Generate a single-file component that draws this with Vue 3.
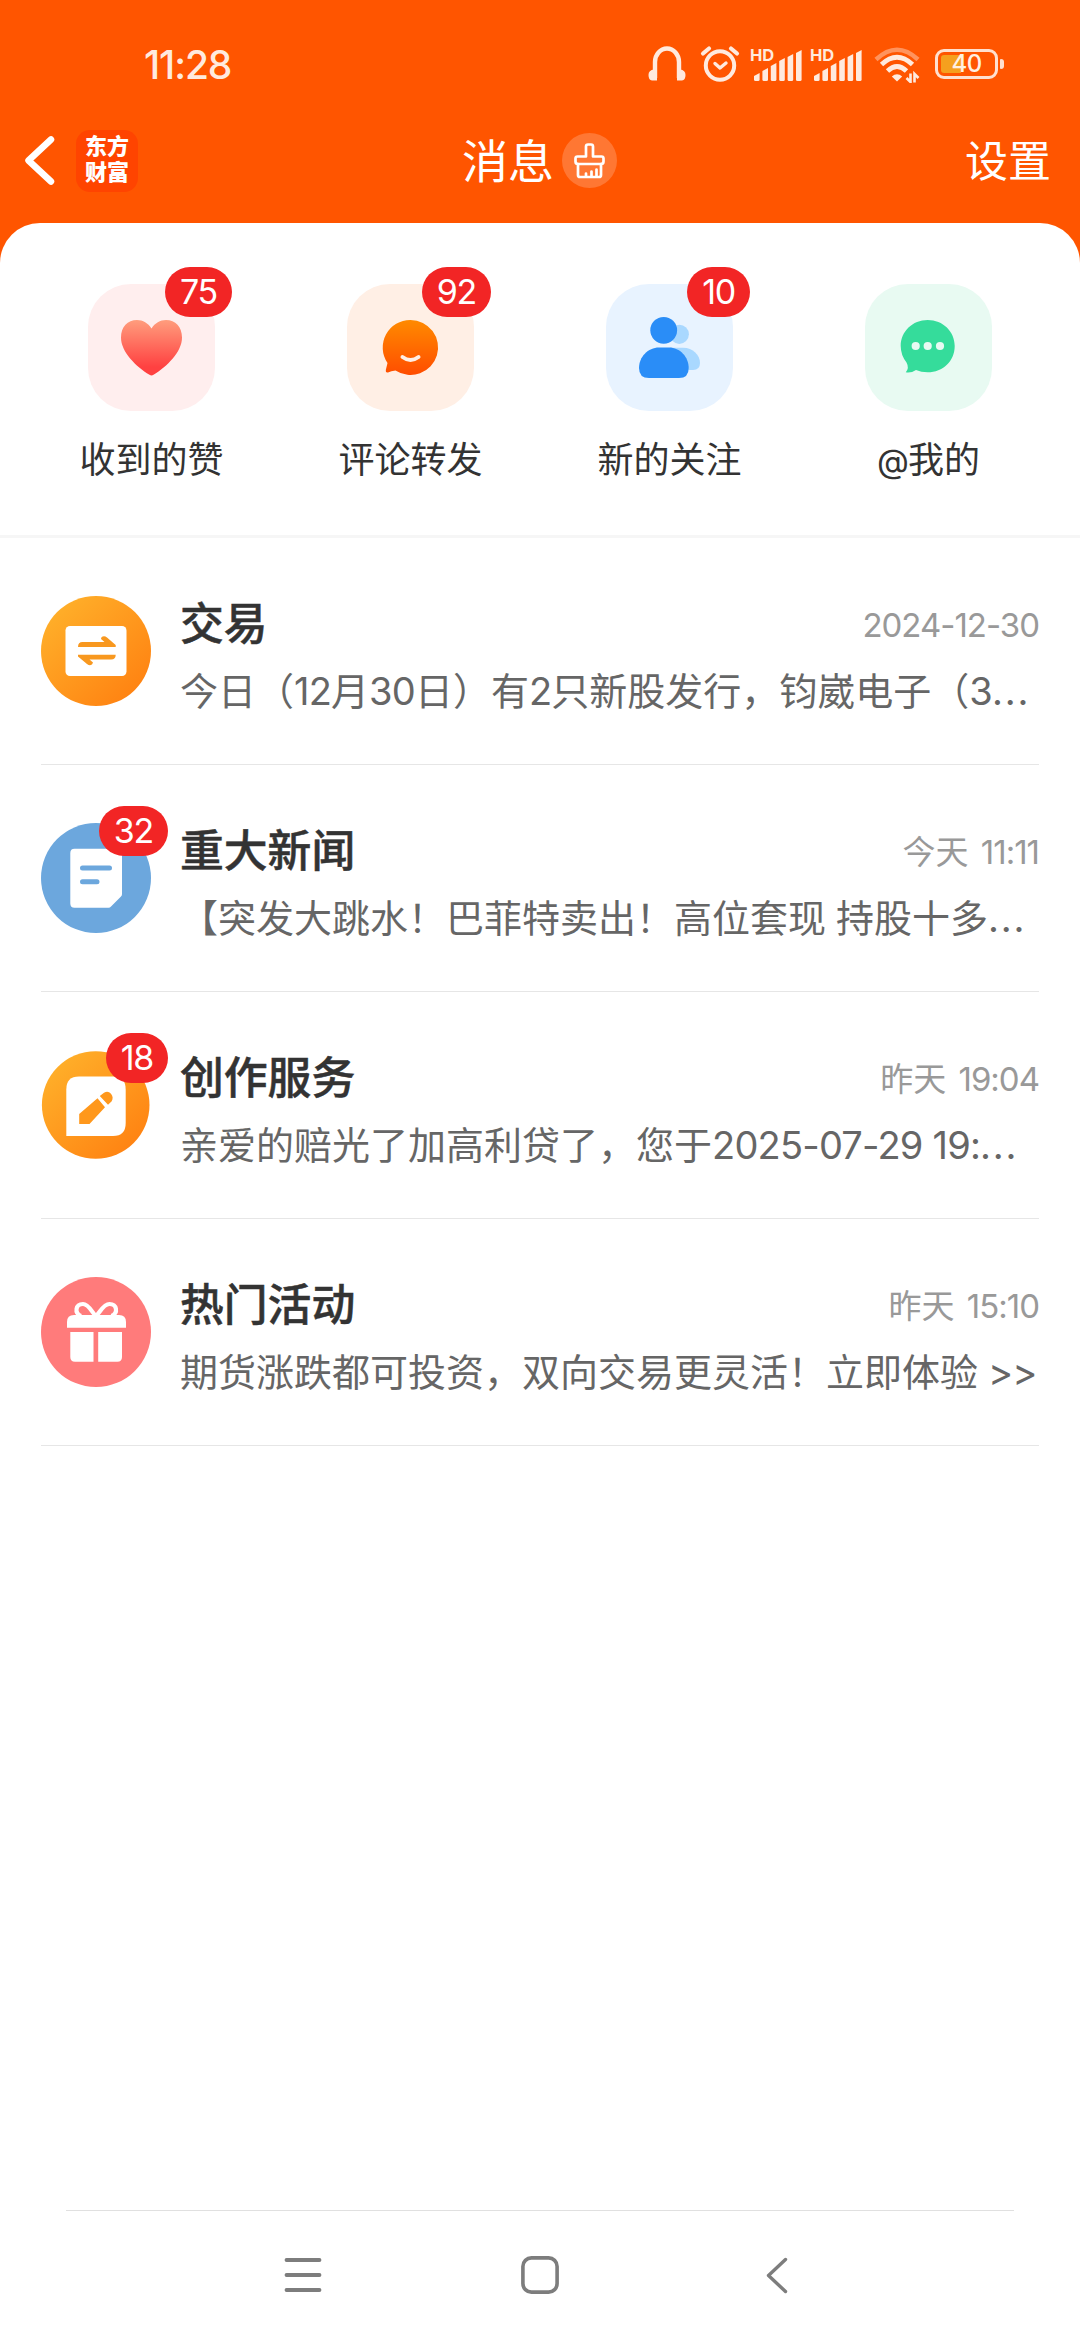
<script setup>
const shortcuts = [
  { key: 'like', label: '收到的赞', count: 75 },
  { key: 'comment', label: '评论转发', count: 92 },
  { key: 'follow', label: '新的关注', count: 10 },
  { key: 'mention', label: '@我的', count: 0 },
]

const messages = [
  { key: 'trade', title: '交易', time: '2024-12-30', text: '今日（12月30日）有2只新股发行，钧崴电子（3…', count: 0 },
  { key: 'news', title: '重大新闻', time: '今天 11:11', text: '【突发大跳水！巴菲特卖出！高位套现 持股十多…', count: 32 },
  { key: 'create', title: '创作服务', time: '昨天 19:04', text: '亲爱的赔光了加高利贷了，您于2025-07-29 19:…', count: 18 },
  { key: 'event', title: '热门活动', time: '昨天 15:10', text: '期货涨跌都可投资，双向交易更灵活！立即体验 >>', count: 0 },
]

// Splits a string into Latin, ellipsis and CJK runs so each gets its own tracking
const runs = (s) =>
  s.split(/([\x20-\x7e]+|…)/).filter(Boolean).map((t) => ({
    t: t === '…' ? '...' : t,
    c: t === '…' ? 'dots' : /^[\x20-\x7e]+$/.test(t) ? 'latin' : 'cjk',
  }))

const bars = [8, 13, 18, 23, 27, 31]
</script>

<template>
  <div class="screen">
    <header class="top">
      <div class="status">
        <span class="clock">11:28</span>
        <div class="status-icons">
          <svg class="ic-head" width="38" height="37" viewBox="0 0 38 37" fill="none" stroke="#ffeade">
            <path d="M7 33V17a12 13.5 0 0 1 24 0V33" stroke-width="4.4" />
            <path d="M6 24.500Q.5 25 .5 30T4 35.500H9V24.500ZM32 24.500Q37.500 25 37.500 30T34 35.500H29V24.500Z" fill="#ffeade" stroke="none" />
          </svg>
          <svg class="ic-alarm" width="40" height="37" viewBox="0 0 40 37" fill="none" stroke="#ffeade" stroke-linecap="round" stroke-linejoin="round">
            <circle cx="20" cy="20.500" r="14.200" stroke-width="4" />
            <path d="M15 18.500 20 23l6-5" stroke-width="3.400" />
            <path d="M3 8.500 9 3.500M37 8.500 31 3.500" stroke-width="4.200" />
          </svg>
          <div v-for="n in 2" :key="n" class="signal">
            <span class="hd">HD</span>
            <svg width="48" height="32" viewBox="0 0 48 32" fill="#ffeade">
              <path v-for="(h, i) in bars" :key="i" :d="`M${i * 8.400} ${32 - h + 3}l5.600-3v${h - 1.500}q0 1.500-1.500 1.500h-2.600q-1.500 0-1.500-1.500z`" />
            </svg>
          </div>
          <svg class="ic-wifi" width="47" height="36" viewBox="0 0 47 36" fill="none" stroke="#ffeade">
            <path d="M2 12.500Q23 -7 44 12.500" stroke-width="4.500" opacity=".42" />
            <path d="M7.500 17.500Q23 3 38.500 17.500" stroke-width="4.800" />
            <path d="M13.500 24Q23 15 32.500 24" stroke-width="4.800" />
            <path d="M23 34.500 17.800 29.500Q23 25 28.200 29.500Z" fill="#ffeade" stroke="none" />
            <path d="M36.500 26.500V35L32.500 31M40.500 35.500V27L44.500 31" stroke-width="2.600" />
          </svg>
          <div class="battery"><div class="cell"><i></i><b>40</b></div><em></em></div>
        </div>
      </div>
      <nav class="bar">
        <div class="left">
          <svg width="31" height="51" viewBox="0 0 31 51" fill="none" stroke="#fff" stroke-width="6.500" stroke-linecap="round" stroke-linejoin="round">
            <path d="M27 4.500 4.500 25.500 27 46.500" />
          </svg>
          <div class="logo"><span>东方</span><span>财富</span></div>
        </div>
        <div class="title">
          <span>消息</span>
          <svg width="55" height="55" viewBox="0 0 55 55" fill="none" stroke="#fff" stroke-width="2.700" stroke-linejoin="round" stroke-linecap="round">
            <circle cx="27.500" cy="27.500" r="27.500" fill="#ff7733" stroke="none" />
            <path d="M24 23.500V13.500Q24 11.500 26 11.500H29Q31 11.500 31 13.500V23.500H39.500Q41.500 23.500 41.500 25.500V28.500Q41.500 31 39 31H16Q13.500 31 13.500 28.500V25.500Q13.500 23.500 15.500 23.500Z" />
            <path d="M16 31V42Q16 44 18 44H37Q39 44 39 42V31M24 40.500V44M29.500 38.500V44M34.500 36.500V44" />
          </svg>
        </div>
        <span class="settings">设置</span>
      </nav>
    </header>

    <main class="sheet">
      <section class="shortcuts">
        <div v-for="s in shortcuts" :key="s.key" class="shortcut">
          <div class="tile" :class="s.key">
            <svg v-if="s.key === 'like'" viewBox="0 0 127 127">
              <defs><linearGradient id="gl" x1="0" y1="0" x2="0" y2="1"><stop offset="0" stop-color="#ff9d7d" /><stop offset=".85" stop-color="#ff4141" /></linearGradient></defs>
              <path fill="url(#gl)" d="M63.500 44.500C67 39 72 36 78 36C87.500 36 94 43 94 53.500C94 68 79 82.500 65.500 90.800Q63.500 92 61.500 90.800C48 82.500 33 68 33 53.500C33 43 39.500 36 49 36C55 36 60 39 63.500 44.500Z" />
            </svg>
            <svg v-else-if="s.key === 'comment'" viewBox="0 0 127 127">
              <defs><linearGradient id="gc" x1="0" y1="0" x2="0" y2="1"><stop offset="0" stop-color="#ff8a00" /><stop offset="1" stop-color="#ff4d00" /></linearGradient></defs>
              <path fill="url(#gc)" d="M63.500 36A27.500 27.500 0 1 1 48.500 86.500Q44 87 41 88.500Q38.300 89 38.800 86L40.500 79A27.500 27.500 0 0 1 63.500 36Z" />
              <path d="M55.500 73Q63.500 79 71.500 73" fill="none" stroke="#ffefe5" stroke-width="4" stroke-linecap="round" />
            </svg>
            <svg v-else-if="s.key === 'follow'" viewBox="0 0 127 127">
              <g fill="#a9d8ff"><circle cx="73.300" cy="50.300" r="9.600" /><path d="M64 63.700H77C87 63.700 94 71 94 79Q94 86 87 86H64Z" /></g>
              <g fill="#2a8df7"><circle cx="57.700" cy="46.300" r="13.400" /><path d="M53 63.500H63C74 63.500 82.700 73 82.700 84Q82.700 94 73 94H43Q33 94 33 84C33 73 42 63.500 53 63.500Z" /></g>
            </svg>
            <svg v-else viewBox="0 0 127 127">
              <path fill="#35dc9b" d="M62.700 36C78 36 89.700 47.500 89.700 62C89.700 77 78 88.300 62.700 88.300Q56 88.300 51 86Q46 89.300 40.800 88.300Q44.500 84 41.500 78.500Q35.700 71 35.700 62C35.700 47.500 47.500 36 62.700 36Z" />
              <g fill="#e8faf2"><circle cx="50.700" cy="62" r="4.100" /><circle cx="62.700" cy="62" r="4.100" /><circle cx="75" cy="62" r="4.100" /></g>
            </svg>
            <span v-if="s.count" class="badge">{{ s.count }}</span>
          </div>
          <span class="label"><span v-for="(r, i) in runs(s.label)" :key="i" :class="r.c">{{ r.t }}</span></span>
        </div>
      </section>

      <section class="list">
        <article v-for="m in messages" :key="m.key" class="row">
          <div class="avatar">
            <svg viewBox="0 0 110 110">
              <defs><linearGradient id="go" x1="0.100" y1="0.100" x2=".85" y2=".9"><stop offset="0" stop-color="#ffb02a" /><stop offset="1" stop-color="#ff8312" /></linearGradient></defs>
              <template v-if="m.key === 'trade'">
                <circle cx="55" cy="55" r="55" fill="url(#go)" />
                <rect x="24.500" y="30" width="61" height="50" rx="4.500" fill="#fff" />
                <path fill="#f8981f" d="M37 51Q37 46 41.500 46H63.500L60 43Q60 40.500 63 40.200Q64.500 40.300 66 41.500L74.700 49V51ZM74.700 58.700Q74.700 63.500 70.200 63.500H48.500L52 66.500Q51.500 69 49 69.300Q47.500 69.300 46 68L37 60.500V58.700Z" />
              </template>
              <template v-else-if="m.key === 'news'">
                <circle cx="55" cy="55" r="55" fill="#6ca7dd" />
                <path fill="#fff" d="M33.500 25.700H77Q81 25.700 81 29.700V71Q81 72.500 80 73.500L70 83.500Q69 84.700 67.500 84.700H33.500Q29.300 84.700 29.300 80.500V30Q29.300 25.700 33.500 25.700Z" />
                <path d="M41.500 45H68.500M41.500 58.700H56" stroke="#6ca7dd" stroke-width="5" stroke-linecap="round" />
              </template>
              <template v-else-if="m.key === 'create'">
                <circle cx="54.700" cy="55" r="53.800" fill="url(#go)" />
                <path fill="#fff" d="M38 26.500H72Q84.700 26.500 84.700 39.500V73Q84.700 86 72 86H25.300V39.500Q25.300 26.500 38 26.500Z" />
                <path fill="#ff981c" d="M38.200 64 56.500 48.300 64 57.300 48.500 74H38.200ZM58.800 46 63 42.800Q67 40.500 70 43.700Q73 47.500 70.500 51.500L67 54.800Z" />
              </template>
              <template v-else>
                <circle cx="55" cy="55" r="55" fill="#ff7b7b" />
                <path fill="#fff" d="M33 38H78Q85 38 85 45V50.700H26V45Q26 38 33 38ZM29.300 55H52.500V84.700H34Q29.300 84.700 29.300 80ZM57.200 55H81V80Q81 84.700 76.300 84.700H57.200Z" />
                <path d="M40 39C33 36 34.500 27 42 27C48 27 51 36 55 39C59 36 62 27 68.500 27C76 27 77.500 36 70.500 39" fill="none" stroke="#fff" stroke-width="4.200" />
              </template>
            </svg>
            <span v-if="m.count" class="badge">{{ m.count }}</span>
          </div>
          <div class="body">
            <div class="head">
              <h3>{{ m.title }}</h3>
              <time><span v-for="(r, i) in runs(m.time)" :key="i" :class="r.c">{{ r.t }}</span></time>
            </div>
            <p><span v-for="(r, i) in runs(m.text)" :key="i" :class="r.c">{{ r.t }}</span></p>
          </div>
        </article>
      </section>
    </main>

    <footer class="sysnav">
      <svg width="38" height="38" viewBox="0 0 38 38" stroke="#7d7d7d" stroke-width="3.800" stroke-linecap="round"><path d="M2.500 4H35.500M2.500 19H35.500M2.500 34H35.500" /></svg>
      <svg width="38" height="38" viewBox="0 0 38 38" fill="none" stroke="#7d7d7d" stroke-width="3.600"><rect x="1.900" y="1.900" width="34.200" height="34.200" rx="8.500" /></svg>
      <svg width="38" height="38" viewBox="0 0 38 38" fill="none" stroke="#7d7d7d" stroke-width="3.400" stroke-linecap="round" stroke-linejoin="round"><path d="M27.500 3.500 10.500 19.500 27.500 35.500" /></svg>
    </footer>
  </div>
</template>

<style>
body {
  margin: 0;
  background: #fff;
}
</style>

<style scoped>
.screen {
  width: 1080px;
  height: 2340px;
  display: flex;
  flex-direction: column;
  overflow: hidden;
  background: #ff5500;
  font-family: Inter, "Noto Sans CJK SC", sans-serif;
  color: #333;
}
svg { display: block; flex: none; }

.top { height: 223px; flex: none; color: #fff; }
.status {
  height: 98px;
  box-sizing: border-box;
  padding: 30px 76px 0 144px;
  display: flex;
  justify-content: space-between;
  align-items: flex-start;
}
.clock {
  font-size: 39px;
  line-height: 69px;
  font-weight: 500;
  letter-spacing: -1.1px;
  color: #ffeade;
}
.status-icons { display: flex; align-items: flex-start; padding-top: 15px; }
.ic-alarm { margin-left: 14px; }
.signal {
  position: relative;
  width: 48px;
  margin-left: 12px;
  padding-top: 4px;
}
.signal svg { margin-left: 1px; }
.ic-alarm + .signal { margin-left: 13px; }
.hd {
  position: absolute;
  left: -3px;
  top: 2px;
  font-size: 16.500px;
  line-height: 16px;
  font-weight: 700;
  color: #ffeade;
}
.ic-wifi { margin-left: 13px; margin-top: 2px; }
.battery { display: flex; align-items: center; margin: 4px 0 0 14px; }
.cell {
  width: 63px;
  height: 30px;
  box-sizing: border-box;
  padding: 3px;
  border: 3.500px solid #ffe0cf;
  border-radius: 9px;
  display: grid;
}
.cell i, .cell b { grid-area: 1 / 1; }
.cell i { width: 20px; background: #f5a01e; border-radius: 3px 0 0 3px; }
.cell b {
  font-size: 24px;
  line-height: 18px;
  font-weight: 500;
  text-align: center;
  letter-spacing: -.5px;
  color: #fff0e2;
}
.battery em { width: 4px; height: 10px; margin-left: 2px; border-radius: 1px 3px 3px 1px; background: #ffe0cf; }

.bar {
  height: 125px;
  display: grid;
  grid-template-columns: 1fr auto 1fr;
  align-items: center;
  padding: 0 29px 0 24px;
}
.left { display: flex; align-items: center; gap: 21px; }
.logo {
  width: 62px;
  height: 62px;
  border-radius: 14px;
  background: #ff4400;
  display: flex;
  flex-direction: column;
  align-items: center;
  justify-content: center;
}
.logo span { font-size: 22px; line-height: 26px; font-weight: 900; }
.logo span:first-child { margin-top: -3px; }
.title { display: flex; align-items: center; gap: 8px; font-size: 46px; line-height: 60px; margin-left: 4px; }
.settings { justify-self: end; font-size: 43px; line-height: 60px; }

.sheet {
  flex: 1;
  background: #fff;
  border-radius: 40px 40px 0 0;
}
.shortcuts {
  height: 315px;
  box-sizing: border-box;
  border-bottom: 3px solid #f6f6f6;
  padding: 61px 22px 0;
  display: flex;
}
.shortcut { flex: 1; display: flex; flex-direction: column; align-items: center; }
.tile { position: relative; width: 127px; height: 127px; border-radius: 43px; }
.tile svg { width: 127px; height: 127px; }
.like { background: #ffeeee; }
.comment { background: #ffefe5; }
.follow { background: #e8f3ff; }
.mention { background: #e8faf2; }
.badge {
  position: absolute;
  right: -17px;
  top: -17px;
  height: 50px;
  padding: 0 15px;
  border-radius: 25px;
  background: #f22525;
  color: #fff;
  font-size: 34px;
  line-height: 50px;
  letter-spacing: -1.300px;
}
.label { margin-top: 24px; font-size: 36px; line-height: 50px; white-space: nowrap; }
.label .latin { font-size: 33px; }

.list { padding: 0 41px; }
.row {
  height: 227px;
  box-sizing: border-box;
  border-bottom: 1px solid #e6e6e6;
  padding-top: 58px;
  display: flex;
  gap: 29px;
}
.avatar { position: relative; width: 110px; height: 110px; flex: none; }
.avatar svg { width: 110px; height: 110px; }
.body { flex: 1; min-width: 0; }
.head { display: flex; justify-content: space-between; align-items: center; height: 58px; }
h3 { margin: 0; font-size: 43.800px; line-height: 58px; font-weight: 500; -webkit-text-stroke: .5px #333; }
time { font-size: 33px; line-height: 58px; color: #999; white-space: nowrap; word-spacing: 4px; }
p { margin: 9px 0 0; font-size: 38px; line-height: 56px; color: #666; white-space: nowrap; }
.latin { letter-spacing: -.8px; }
time .latin { letter-spacing: -1px; }
.dots { letter-spacing: 1.800px; }

.sysnav {
  height: 130px;
  flex: none;
  background: #fff;
  display: flex;
  justify-content: center;
  gap: 199px;
  padding-top: 46px;
  box-sizing: border-box;
  background-image: linear-gradient(#e0e0e0, #e0e0e0);
  background-size: 948px 1px;
  background-position: center 0;
  background-repeat: no-repeat;
}
</style>
